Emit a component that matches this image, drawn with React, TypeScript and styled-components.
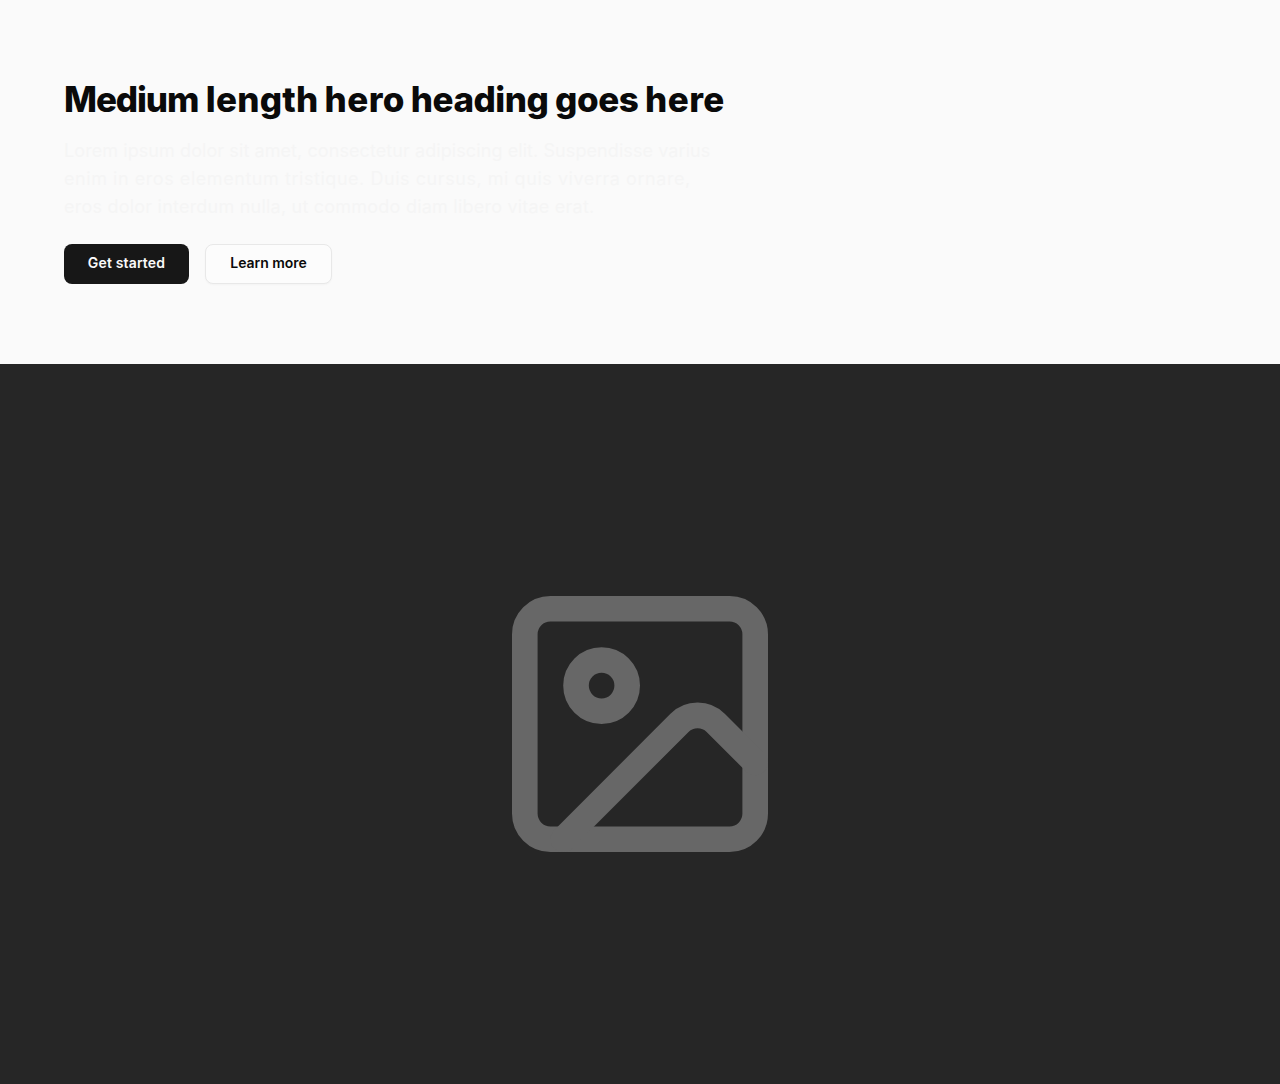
import React from 'react'

import styled, { createGlobalStyle } from "styled-components"
import { Image } from "lucide-react"

const GlobalStyle = createGlobalStyle`
  body {
    margin: 0;
    background: #fafafa;
    font-family: Inter, "Liberation Sans", sans-serif;
  }
`
const HeroComponent = styled.header`
  display: flex;
  flex-direction: column;
  align-items: flex-start;
  padding: 80px 64px;
`
const Heading = styled.h1`
  margin: 0 0 19px;
  color: #0a0a0a;
  font-size: 35px;
  font-weight: 800;
  line-height: 38px;
  letter-spacing: -1.4px;
  white-space: nowrap;
`
const Word = styled.span<{ $tracking: number }>`
  margin-right: ${({ $tracking }) => -$tracking}px;
  letter-spacing: ${({ $tracking }) => $tracking}px;
`
const Description = styled.p`
  margin: 0 0 23px;
  color: #f5f5f5;
  font-size: 18px;
  line-height: 28px;
  white-space: nowrap;
`
const Line = styled.span<{ $tracking: number }>`
  display: block;
  letter-spacing: ${({ $tracking }) => $tracking}px;
`
const ButtonContainer = styled.div`
  display: flex;
  gap: 16px;
`
const Button = styled.button<{ $outline?: boolean }>`
  box-sizing: border-box;
  width: ${({ $outline }) => ($outline ? "127px" : "125px")};
  height: 40px;
  padding: 0 0 2px;
  border: ${({ $outline }) => ($outline ? "1px solid #e8e8e8" : "none")};
  border-radius: 8px;
  background: ${({ $outline }) => ($outline ? "#fcfcfc" : "#171717")};
  box-shadow: ${({ $outline }) => ($outline ? "0 1px 2px rgba(0, 0, 0, 0.03)" : "none")};
  color: ${({ $outline }) => ($outline ? "#0a0a0a" : "#fafafa")};
  font-family: inherit;
  font-size: 14px;
  font-weight: 600;
  line-height: 20px;
  letter-spacing: ${({ $outline }) => ($outline ? "-0.05px" : "0.15px")};
`
const Placeholder = styled.div`
  display: flex;
  align-items: center;
  justify-content: center;
  height: 720px;
  background: #262626;
  color: #676767;
`

const headingWords = [
  { text: "Medium", tracking: -1.1 },
  { text: "length", tracking: 0.25 },
  { text: "hero", tracking: 0.45 },
  { text: "heading", tracking: -0.5 },
  { text: "goes", tracking: -0.5 },
  { text: "here", tracking: 0.45 },
]

function App() {
  return (
    <>
      <GlobalStyle />
      <HeroComponent>
        <Heading>
          {headingWords.map(({ text, tracking }, i) => (
            <React.Fragment key={text}>
              {i > 0 && " "}
              <Word $tracking={tracking}>{text}</Word>
            </React.Fragment>
          ))}
        </Heading>
        <Description>
          <Line $tracking={0.08}>
            Lorem ipsum dolor sit amet, consectetur adipiscing elit. Suspendisse varius
          </Line>
          <Line $tracking={0.55}>
            enim in eros elementum tristique. Duis cursus, mi quis viverra ornare,
          </Line>
          <Line $tracking={0.22}>
            eros dolor interdum nulla, ut commodo diam libero vitae erat.
          </Line>
        </Description>
        <ButtonContainer>
          <Button>Get started</Button>
          <Button $outline>Learn more</Button>
        </ButtonContainer>
      </HeroComponent>
      <Placeholder>
        <Image size={256} viewBox="2 2 20 20" strokeWidth={2} />
      </Placeholder>
    </>
  )
}

export default App
